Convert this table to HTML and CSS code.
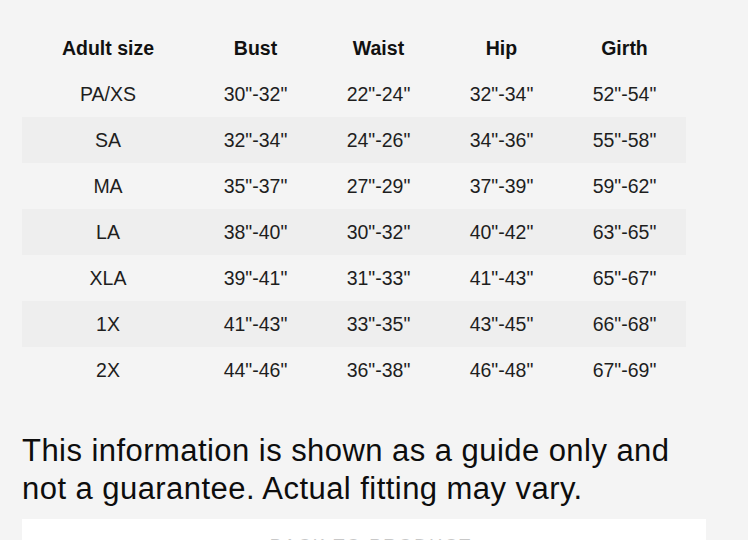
FILE: index.html
```html
<!DOCTYPE html>
<html>
<head>
<meta charset="utf-8">
<link rel="stylesheet" href="styles.css">
</head>
<body>
<div class="page">
  <div class="panel">
    <table class="sizes">
      <thead>
        <tr><th class="first">Adult size</th><th>Bust</th><th>Waist</th><th>Hip</th><th>Girth</th></tr>
      </thead>
      <tbody>
        <tr><td>PA/XS</td><td>30"-32"</td><td>22"-24"</td><td>32"-34"</td><td>52"-54"</td></tr>
        <tr class="alt"><td>SA</td><td>32"-34"</td><td>24"-26"</td><td>34"-36"</td><td>55"-58"</td></tr>
        <tr><td>MA</td><td>35"-37"</td><td>27"-29"</td><td>37"-39"</td><td>59"-62"</td></tr>
        <tr class="alt"><td>LA</td><td>38"-40"</td><td>30"-32"</td><td>40"-42"</td><td>63"-65"</td></tr>
        <tr><td>XLA</td><td>39"-41"</td><td>31"-33"</td><td>41"-43"</td><td>65"-67"</td></tr>
        <tr class="alt"><td>1X</td><td>41"-43"</td><td>33"-35"</td><td>43"-45"</td><td>66"-68"</td></tr>
        <tr><td>2X</td><td>44"-46"</td><td>36"-38"</td><td>46"-48"</td><td>67"-69"</td></tr>
      </tbody>
    </table>
    <p class="note">This information is shown as a guide only and not a guarantee. Actual fitting may vary.</p>
    <div class="card">
      <div class="card-title">BACK TO PRODUCT</div>
    </div>
  </div>
  <div class="edge"></div>
</div>
</body>
</html>
```
FILE: styles.css
```css
html, body {
  margin: 0;
  padding: 0;
  background: #ffffff;
  overflow: hidden;
}
.page {
  display: flex;
  width: 756px;
  height: 540px;
  overflow: hidden;
  font-family: "Liberation Sans", Arial, Helvetica, sans-serif;
}
.panel {
  width: 748px;
  flex: none;
  background: #f4f4f4;
  padding: 25px 42px 0 22px;
  box-sizing: border-box;
}
.edge {
  flex: 1;
  background: #ffffff;
}
.sizes {
  border-collapse: collapse;
  width: 664px;
  table-layout: fixed;
  font-size: 19.5px;
  color: #1e1e1e;
}
.sizes th, .sizes td {
  height: 46px;
  padding: 0;
  text-align: center;
  vertical-align: middle;
  width: 123px;
}
.sizes th.first {
  width: 172px;
}
.sizes th {
  font-weight: bold;
  color: #111111;
}
.sizes tr.alt td {
  background: #eeeeee;
}
.note {
  margin: 39px 0 0 0;
  font-size: 31px;
  line-height: 38px;
  color: #0d0d0d;
  letter-spacing: 0.45px;
}
.card {
  margin-top: 11px;
  background: #ffffff;
  height: 80px;
  padding-top: 17px;
  box-sizing: border-box;
}
.card-title {
  text-align: center;
  font-size: 18px;
  letter-spacing: 2px;
  color: #c8c8c8;
  padding-left: 14px;
}
```
